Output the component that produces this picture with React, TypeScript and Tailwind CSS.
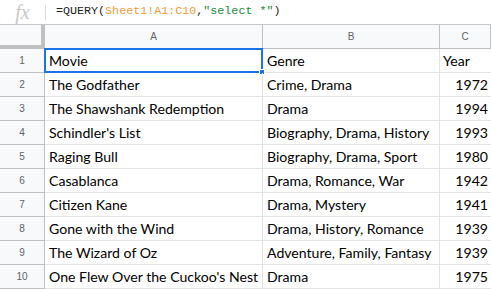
const rows: [string, string, string][] = [
  ["Movie", "Genre", "Year"],
  ["The Godfather", "Crime, Drama", "1972"],
  ["The Shawshank Redemption", "Drama", "1994"],
  ["Schindler's List", "Biography, Drama, History", "1993"],
  ["Raging Bull", "Biography, Drama, Sport", "1980"],
  ["Casablanca", "Drama, Romance, War", "1942"],
  ["Citizen Kane", "Drama, Mystery", "1941"],
  ["Gone with the Wind", "Drama, History, Romance", "1939"],
  ["The Wizard of Oz", "Adventure, Family, Fantasy", "1939"],
  ["One Flew Over the Cuckoo's Nest", "Drama", "1975"],
];

const cellFont = "font-['Lato',sans-serif] text-[14.1px] text-black";

function FormulaBar() {
  return (
    <div className="flex h-[25px] items-center border-b border-[#c7c7c7] bg-white">
      <div className="flex w-[45px] items-center justify-center">
        <span className="font-['Liberation_Serif',serif] text-[20px] italic leading-none text-[#c8c8c8]">
          fx
        </span>
      </div>
      <div className="h-[15px] w-px bg-[#dadce0]" />
      <div className="pl-[10px] font-['Liberation_Mono',monospace] text-[11.7px] text-[#202124]">
        =QUERY(<span className="text-[#f29b34]">Sheet1!A1:C10</span>,
        <span className="text-[#188a3b]">"select *"</span>)
      </div>
    </div>
  );
}

export default function App() {
  return (
    <div className="h-[289px] w-[491px] overflow-hidden bg-white">
      <FormulaBar />
      <div className="grid grid-cols-[45px_218px_177px_51px] auto-rows-[24px]">
        <div className="border-b-[4px] border-r-[4px] border-[#c0c0c0] bg-[#f8f9fa]" />
        {["A", "B", "C"].map((c) => (
          <div
            key={c}
            className="flex items-center justify-center border-b border-r border-[#c0c0c0] bg-[#f8f9fa] font-['Liberation_Sans',sans-serif] text-[10px] text-[#5f6368]"
          >
            {c}
          </div>
        ))}
        {rows.map((r, i) => (
          <div key={i} className="contents">
            <div className="flex items-center justify-center border-b border-r border-[#c0c0c0] bg-[#f8f9fa] font-['Liberation_Sans',sans-serif] text-[10px] text-[#5f6368]">
              {i + 1}
            </div>
            <div
              className={`relative flex items-center border-b border-r border-[#e2e3e3] pl-[4px] ${cellFont}`}
            >
              <span className="whitespace-nowrap">{r[0]}</span>
              {i === 0 && (
                <div className="pointer-events-none absolute -left-px -top-px bottom-[-1px] right-[-1px] border-2 border-[#1a73e8]">
                  <div className="absolute -bottom-[4px] -right-[4px] h-[6px] w-[6px] border border-white bg-[#1a73e8]" />
                </div>
              )}
            </div>
            <div
              className={`flex items-center border-b border-r border-[#e2e3e3] pl-[4px] ${cellFont}`}
            >
              <span className="whitespace-nowrap">{r[1]}</span>
            </div>
            <div
              className={`flex items-center border-b border-[#e2e3e3] px-[3px] ${cellFont} ${
                i === 0 ? "justify-start" : "justify-end"
              }`}
            >
              {r[2]}
            </div>
          </div>
        ))}
      </div>
    </div>
  );
}
